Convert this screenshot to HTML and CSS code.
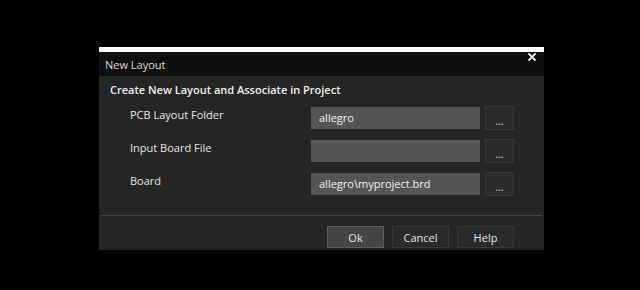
FILE: index.html
```html
<!DOCTYPE html>
<html lang="en">
<head>
    <meta charset="UTF-8">
    <title>New Layout</title>
    <link rel="stylesheet" href="styles.css">
</head>
<body>
    <div class="dialog">
        <div class="top-strip"></div>
        <div class="title-bar">
            <span class="title">New Layout</span>
            <svg class="close-btn" width="8" height="8" viewBox="0 0 8 8">
                <path d="M1 1 L7 7 M7 1 L1 7" stroke="#f2f2f2" stroke-width="1.8" stroke-linecap="square"/>
            </svg>
        </div>

        <div class="dialog-body">
            <h1 class="section-title">Create New Layout and Associate in Project</h1>

            <div class="form-rows">
                <div class="form-row">
                    <label class="row-label">PCB Layout Folder</label>
                    <div class="text-field">allegro</div>
                    <button class="browse-btn">...</button>
                </div>
                <div class="form-row">
                    <label class="row-label">Input Board File</label>
                    <div class="text-field"></div>
                    <button class="browse-btn">...</button>
                </div>
                <div class="form-row">
                    <label class="row-label">Board</label>
                    <div class="text-field">allegro\myproject.brd</div>
                    <button class="browse-btn">...</button>
                </div>
            </div>

            <div class="separator"></div>

            <div class="actions">
                <button class="action-btn primary">Ok</button>
                <button class="action-btn">Cancel</button>
                <button class="action-btn">Help</button>
            </div>
        </div>
    </div>
</body>
</html>
```

FILE: styles.css
```css
* {
    margin: 0;
    padding: 0;
    box-sizing: border-box;
}

body {
    background: #000;
    font-family: 'Open Sans', 'Noto Sans', sans-serif;
    font-size: 11px;
    color: #e6e6e6;
    width: 640px;
    height: 290px;
    overflow: hidden;
}

.dialog {
    width: 445px;
    margin: 47px 0 0 99px;
}

.top-strip {
    height: 5px;
    background: #fff;
}

.title-bar {
    height: 24px;
    background: #0f0f0f;
    display: flex;
    justify-content: space-between;
    padding: 0 8px 0 6px;
}

.title {
    align-self: center;
    color: #dcdcdc;
}

.close-btn {
    margin-top: 1px;
}

.dialog-body {
    background: #252525;
    height: 174px;
    padding: 6px 2px 2px 2px;
}

.section-title {
    font-size: 11px;
    font-weight: 600;
    line-height: 16px;
    color: #f0f0f0;
    padding-left: 9px;
}

.form-rows {
    display: flex;
    flex-direction: column;
    gap: 9px;
    margin-top: 8px;
    padding: 0 28px 0 29px;
}

.form-row {
    display: flex;
    align-items: center;
    height: 24px;
}

.row-label {
    width: 181px;
    align-self: flex-start;
    line-height: 18px;
}

.text-field {
    width: 169px;
    height: 22px;
    line-height: 22px;
    padding-left: 8px;
    background: #555;
    color: #f2f2f2;
}

.browse-btn {
    width: 29px;
    height: 24px;
    margin-left: 5px;
    background: #2b2b2b;
    border: 1px solid #383838;
    color: #e0e0e0;
    font-family: inherit;
    font-size: 10px;
    line-height: 24px;
    padding-top: 2px;
}

.separator {
    height: 1px;
    background: #444;
    margin-top: 19px;
}

.actions {
    display: flex;
    justify-content: flex-end;
    gap: 8px;
    margin-top: 10px;
    padding-right: 28px;
}

.action-btn {
    width: 57px;
    height: 22px;
    background: #2a2a2a;
    border: 1px solid #383838;
    color: #e6e6e6;
    font-family: inherit;
    font-size: 11px;
}

.action-btn.primary {
    background: #454545;
    border-color: #5e5e5e;
}
```
